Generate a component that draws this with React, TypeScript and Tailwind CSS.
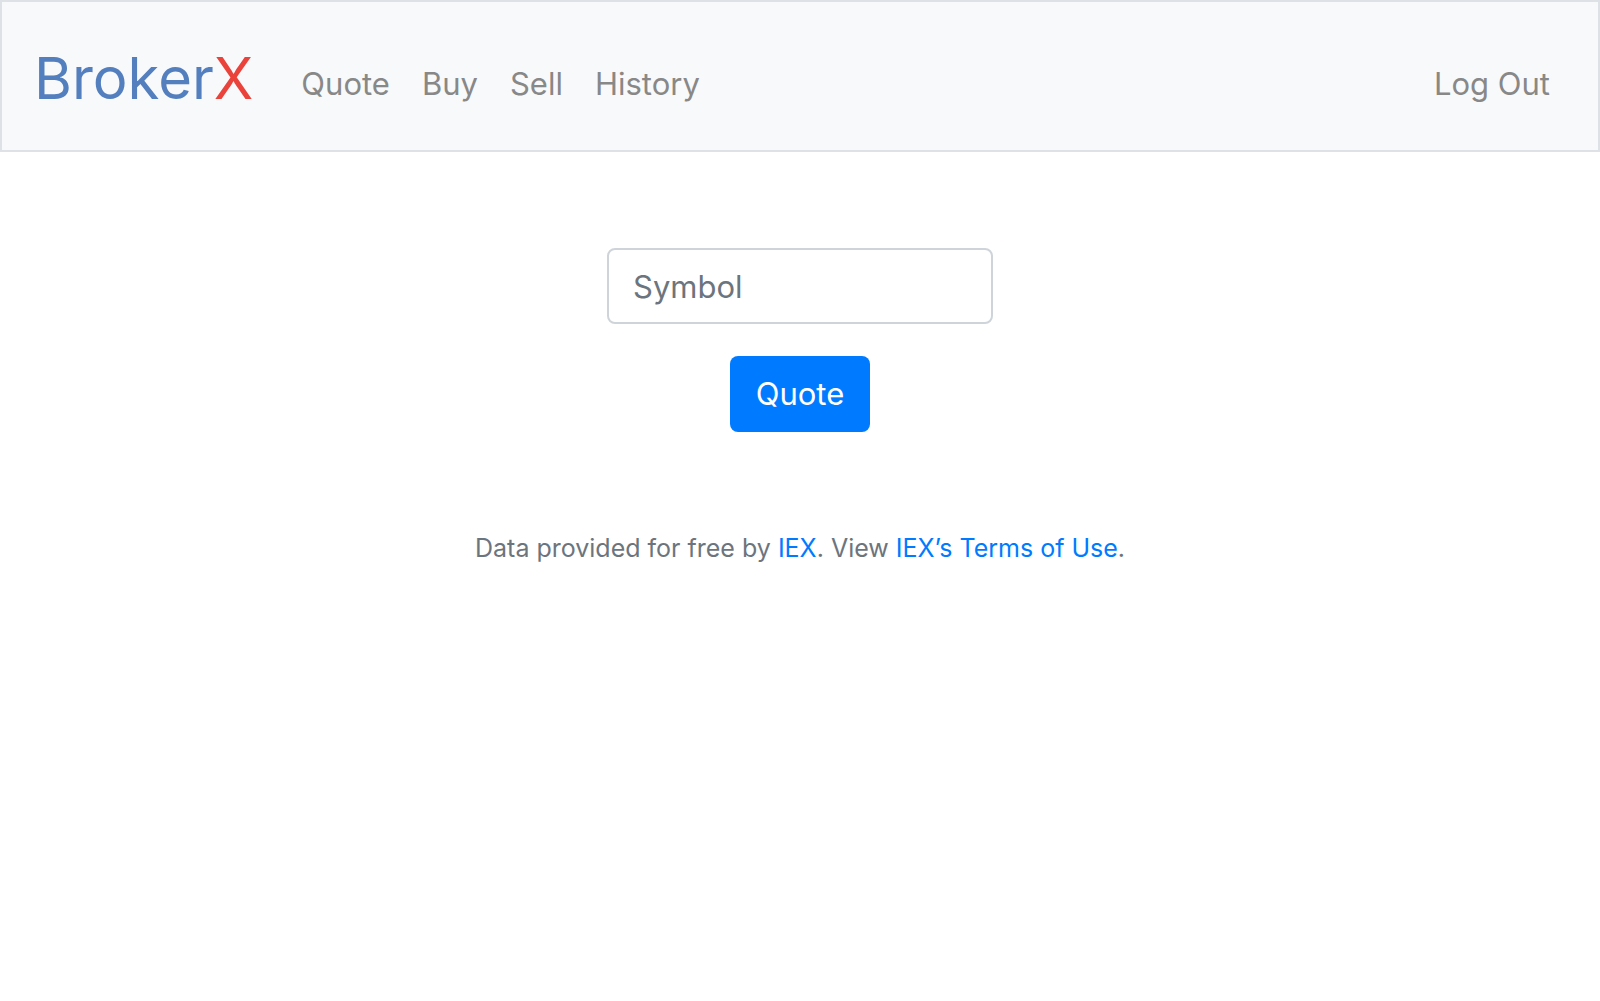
const links = ['Quote', 'Buy', 'Sell', 'History'];

export default function App() {
  return (
    <div className="min-h-screen bg-white font-['Inter',sans-serif] text-[31px] leading-[48px] text-[#212529]">
      <nav className="flex items-center border-2 border-[#dee2e6] bg-[#f8f9fa] px-8 py-4">
        <a href="#" className="mr-8 pt-6 pb-5 text-[58px] leading-[72px] text-[#537fbe]">
          Broker<span className="text-[#ea433b]">X</span>
        </a>
        <ul className="flex flex-1 pt-4 text-[#888888]">
          {links.map((label) => (
            <li key={label}>
              <a href="#" className="block px-4 py-4">{label}</a>
            </li>
          ))}
          <li className="ml-auto">
            <a href="#" className="block px-4 py-4">Log Out</a>
          </li>
        </ul>
      </nav>
      <main className="flex flex-col items-center px-8 pt-24">
        <form className="flex flex-col items-center gap-8" onSubmit={(e) => e.preventDefault()}>
          <input
            aria-label="Symbol"
            placeholder="Symbol"
            className="h-[76px] w-[386px] rounded-lg border-2 border-[#ced4da] bg-white px-6 placeholder:text-[#6c757d]"
          />
          <button type="submit" className="h-[76px] rounded-lg bg-[#007bff] px-[26px] text-white">
            Quote
          </button>
        </form>
      </main>
      <footer className="px-8 pt-24 text-center text-[25px] leading-[40px] text-[#6c757d]">
        Data provided for free by <a href="#" className="text-[#007bff]">IEX</a>. View{' '}
        <a href="#" className="text-[#007bff]">IEX’s Terms of Use</a>.
      </footer>
    </div>
  );
}
